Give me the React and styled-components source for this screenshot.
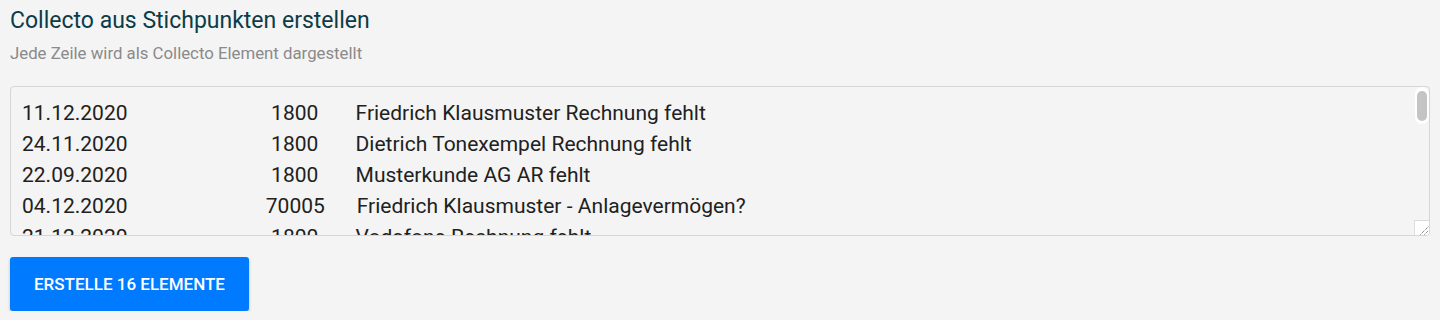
import React from "react";
import styled, { createGlobalStyle } from "styled-components";

const Global = createGlobalStyle`
  html, body { margin: 0; padding: 0; background: #f4f4f4; }
  body { font-family: Roboto, "Noto Sans", Arial, sans-serif; }
`;

const Page = styled.div`
  padding: 6px 10px 0 10px;
  display: flex;
  flex-direction: column;
  align-items: flex-start;
`;

const Title = styled.h2`
  margin: 0;
  font-family: Roboto, Arial, sans-serif;
  font-weight: 400;
  font-size: 23px;
  line-height: 29px;
  color: #0b3c47;
`;

const Subtitle = styled.p`
  margin: 7.5px 0 0 0;
  font-size: 16.8px;
  line-height: 20px;
  color: #8a8a8a;
`;

const Field = styled.div`
  position: relative;
  width: 100%;
  margin-top: 23.5px;
`;

const Area = styled.textarea`
  display: block;
  box-sizing: border-box;
  width: 100%;
  height: 150px;
  padding: 11px 11px;
  border: 1px solid #d6d6d6;
  border-radius: 4px;
  background: #f4f4f4;
  color: #212121;
  font-family: Roboto, Arial, sans-serif;
  font-size: 21px;
  line-height: 31px;
  word-spacing: 0.11px;
  white-space: pre;
  overflow: hidden;
  outline: none;
  resize: none;
`;

const ScrollTrack = styled.div`
  position: absolute;
  top: 1px;
  right: 1px;
  width: 14px;
  height: 37px;
  box-sizing: border-box;
  padding: 4px 2px 3px 2px;
  background: #ffffff;
  border-radius: 7px;
`;

const ScrollThumb = styled.div`
  width: 10px;
  height: 30px;
  border-radius: 5px;
  background: #c4c4c4;
`;

const Corner = styled.div`
  position: absolute;
  right: 1px;
  bottom: 1px;
  width: 15px;
  height: 15px;
  box-sizing: border-box;
  background: #ffffff;
  border-left: 1px solid #dcdcdc;
  border-top: 1px solid #dcdcdc;
  border-bottom-right-radius: 3px;
  display: flex;
  align-items: flex-end;
  justify-content: flex-end;
`;

const Button = styled.button`
  margin-top: 21px;
  height: 54px;
  padding: 0 24px;
  border: none;
  border-radius: 3px;
  background: #007bff;
  color: #ffffff;
  font-family: Roboto, Arial, sans-serif;
  font-weight: 500;
  font-size: 17px;
  letter-spacing: 0;
  text-transform: uppercase;
  box-shadow: 0 2px 3px rgba(0,0,0,0.25);
  cursor: pointer;
`;

const rows = [
  ["11.12.2020", 27, "1800", 7, "Friedrich Klausmuster Rechnung fehlt"],
  ["24.11.2020", 27, "1800", 7, "Dietrich Tonexempel Rechnung fehlt"],
  ["22.09.2020", 27, "1800", 7, "Musterkunde AG AR fehlt"],
  ["04.12.2020", 26, "70005", 6, "Friedrich Klausmuster - Anlagevermögen?"],
  ["21.12.2020", 27, "1800", 7, "Vodafone Rechnung fehlt"],
  ["15.12.2020", 27, "1800", 7, "Telekom Rechnung fehlt"],
  ["03.11.2020", 27, "1800", 7, "Musterkunde AG Gutschrift fehlt"],
  ["18.10.2020", 27, "1800", 7, "Amazon Beleg fehlt"],
  ["09.12.2020", 27, "1800", 7, "Bürobedarf Rechnung fehlt"],
  ["30.11.2020", 27, "1800", 7, "Tankbeleg fehlt"],
  ["02.12.2020", 27, "1800", 7, "Dietrich Tonexempel Gutschrift fehlt"],
  ["27.10.2020", 27, "1800", 7, "Versicherung Beitrag fehlt"],
  ["14.12.2020", 26, "70005", 6, "Laptop - Anlagevermögen?"],
  ["07.12.2020", 27, "1800", 7, "Porto Beleg fehlt"],
  ["19.11.2020", 27, "1800", 7, "Miete Dezember fehlt"],
  ["23.12.2020", 27, "1800", 7, "Bewirtungsbeleg fehlt"],
];

const text = rows
  .map(([d, s1, n, s2, t]) => d + " ".repeat(s1) + n + " ".repeat(s2) + t)
  .join("\n");

export default function App() {
  return (
    <>
      <Global />
      <Page>
        <Title>Collecto aus Stichpunkten erstellen</Title>
        <Subtitle>Jede Zeile wird als Collecto Element dargestellt</Subtitle>
        <Field>
          <Area defaultValue={text} spellCheck={false} />
          <ScrollTrack>
            <ScrollThumb />
          </ScrollTrack>
          <Corner>
            <svg width="10" height="10" viewBox="0 0 10 10">
              <path d="M1.5 9.5 L9.5 1.5 M5.5 9.5 L9.5 5.5" stroke="#555" strokeWidth="1" strokeDasharray="1 1" fill="none" />
            </svg>
          </Corner>
        </Field>
        <Button>Erstelle 16 Elemente</Button>
      </Page>
    </>
  );
}
